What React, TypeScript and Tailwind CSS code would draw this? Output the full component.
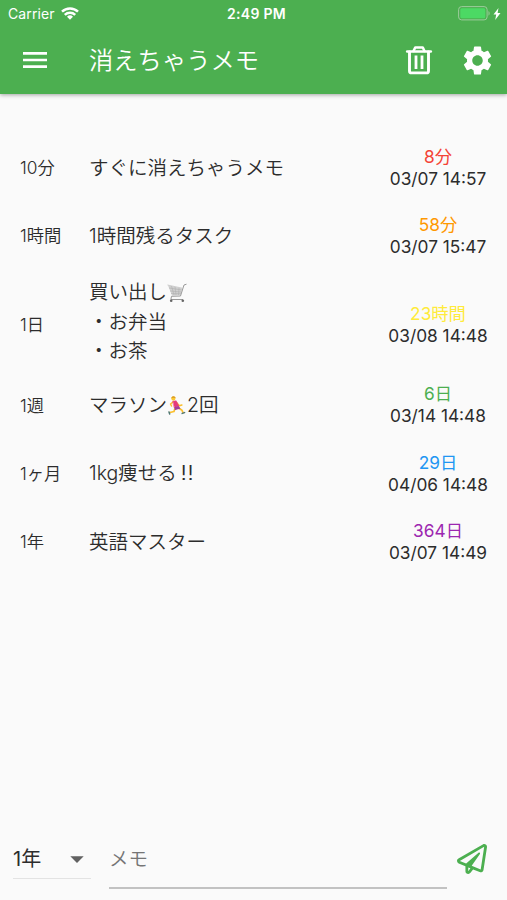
import { FaRegPaperPlane } from 'react-icons/fa';
import { MdArrowDropDown, MdMenu, MdSettings } from 'react-icons/md';
import { ReactNode } from 'react';

type Memo = {
  id: number;
  period: string;
  lines: ReactNode[];
  remaining: string;
  color: string;
  expires: string;
};

const CartIcon = () => (
  <svg viewBox="0 0 20 20" className="inline-block w-5 h-5 align-[-4px]" fill="none">
    <path d="M1 2.5 15 5.5 13.5 12 5 12.5Z" fill="#d0d0d0" />
    <path d="M.5 2 15.3 5.2M2 5l13 2M3 8l11.5 1M4 10.5l10 .2M4.5 3 7 12M8 4l1 8M12 5l-.5 7" stroke="#b0b0b0" strokeWidth=".6" />
    <path d="M19.5 1.2 17 2 13.5 13l-9 .3-.6 3.2H16" stroke="#9a9a9a" strokeWidth="1" />
    <circle cx="4.2" cy="17.7" r="1.3" fill="#666" />
    <circle cx="15.8" cy="17.7" r="1.3" fill="#666" />
  </svg>
);

const RunnerIcon = () => (
  <svg viewBox="0 0 20 20" className="inline-block w-5 h-5 align-[-4px]" fill="none" strokeLinecap="round" strokeLinejoin="round">
    <path d="M6 6 3.500 8 4.500 10M9.500 6.500l2.800 3.300 2.600-.8" stroke="#fbc02d" strokeWidth="1.500" />
    <path d="M8 12 7 15.500 2.800 16.500M11.500 12l3.500 2.300 1 2.200" stroke="#fbc02d" strokeWidth="1.700" />
    <path d="M6 5.200 9.200 4.800l2.600 5.200-4.300 1.500Z" fill="#e6397b" stroke="#e6397b" strokeWidth=".6" />
    <path d="M7.500 11 11.800 10l1.700 2.800-2.500.4-3.300 1Z" fill="#a03c9c" />
    <circle cx="6.400" cy="2.600" r="2.100" fill="#fbc834" />
    <path d="M4.300 2.200C4.600-.1 8-.3 8.600 1.900L6.200 1.700Z" fill="#d99a22" />
    <path d="m2 16 .7 2M15.200 17.400l2.400-.8" stroke="#4f7774" strokeWidth="1.500" />
  </svg>
);

const memos: Memo[] = [
  { id: 1, period: '10分', lines: ['すぐに消えちゃうメモ'], remaining: '8分', color: 'text-[#f44336]', expires: '03/07 14:57' },
  { id: 2, period: '1時間', lines: ['1時間残るタスク'], remaining: '58分', color: 'text-[#ff9800]', expires: '03/07 15:47' },
  { id: 3, period: '1日', lines: [<>買い出し<CartIcon /></>, '・お弁当', '・お茶'], remaining: '23時間', color: 'text-[#ffeb3b]', expires: '03/08 14:48' },
  { id: 4, period: '1週', lines: [<>マラソン<RunnerIcon />2回</>], remaining: '6日', color: 'text-[#4caf50]', expires: '03/14 14:48' },
  { id: 5, period: '1ヶ月', lines: [<>1kg痩せる<span className="inline-block w-5 text-center scale-x-125">‼</span></>], remaining: '29日', color: 'text-[#2196f3]', expires: '04/06 14:48' },
  { id: 6, period: '1年', lines: ['英語マスター'], remaining: '364日', color: 'text-[#9c27b0]', expires: '03/07 14:49' },
];

const TrashIcon = () => (
  <svg viewBox="0 0 28 30" className="w-7 h-[30px]" fill="none" stroke="currentColor" strokeLinejoin="round" strokeLinecap="round">
    <path d="M2.200 6.500h23.600" strokeWidth="2.600" />
    <path d="M8.500 6 10.300 2.400h7.400L19.500 6" strokeWidth="2.500" />
    <path d="M4.500 7v18.900q0 2 2 2h15q2 0 2-2V7" strokeWidth="2.900" />
    <path d="M11 10.500v13.500M17 10.500v13.500" strokeWidth="2.800" strokeLinecap="butt" />
  </svg>
);

const StatusBar = () => (
  <div className="grid grid-cols-3 items-center h-[27px] pl-2 pr-1.5">
    <div className="flex items-center gap-1.5">
      <span className="text-[14px] font-normal leading-none tracking-[0.1px]">Carrier</span>
      <svg viewBox="0 0 18 13" className="w-[18px] h-[13px]" fill="none" stroke="currentColor" strokeWidth="2.500">
        <path d="M1 4.700a11.500 11.500 0 0 1 16 0M3.800 7.900a7.500 7.500 0 0 1 10.400 0" />
        <path d="M9 12.800 6 9.800a4.300 4.300 0 0 1 6 0Z" fill="currentColor" stroke="none" />
      </svg>
    </div>
    <div className="pl-1 text-center text-[14px] font-semibold leading-none tracking-[0.3px]">2:49 PM</div>
    <div className="flex items-center justify-end gap-0.5">
      <svg viewBox="0 0 33 15" className="w-[33px] h-[15px]">
        <rect x=".6" y=".6" width="28.500" height="13.300" rx="3" fill="none" stroke="#9ccc9c" />
        <rect x="2.300" y="2.300" width="25" height="10" rx="1.500" fill="#4cd964" />
        <path d="M30.500 5c1.500.8 1.500 4 0 4.800Z" fill="#9ccc9c" />
      </svg>
      <svg viewBox="0 0 8 12" className="w-2 h-3" fill="currentColor">
        <path d="M5.500 0 .5 6.600h2.700L2.200 12l5.300-7H4.600Z" />
      </svg>
    </div>
  </div>
);

const MemoRow = ({ memo }: { memo: Memo }) => {
  const tall = memo.lines.length > 1;
  return (
    <li className={`flex items-center pl-5 pr-[18px] ${tall ? 'h-[101px]' : 'h-[68.2px]'}`}>
      <div className={`w-[69px] text-[17.300px] ${tall ? 'pt-2' : ''}`}>{memo.period}</div>
      <div className={`flex-1 text-[19.500px] leading-[29.500px] ${tall ? 'pt-[3px]' : 'pt-px'}`}>
        {memo.lines.map((line, i) => (
          <p key={i}>{line}</p>
        ))}
      </div>
      <div className={`text-center text-[17.300px] font-normal leading-[22px] w-[102px] whitespace-nowrap ${tall ? 'pt-2' : ''}`}>
        <p className={memo.color}>{memo.remaining}</p>
        <p>{memo.expires}</p>
      </div>
    </li>
  );
};

export default function App() {
  return (
    <div className="flex flex-col w-full h-[900px] bg-[#fafafa] text-[#2c2c2c] font-[350] font-['Inter','Noto_Sans_CJK_JP',sans-serif]">
      <header className="h-[94px] bg-[#4caf50] text-white shadow-[0_1px_4px_rgba(0,0,0,0.35)]">
        <StatusBar />
        <div className="flex items-center h-[66px] pl-[19px] pr-3">
          <MdMenu className="w-8 h-8" />
          <h1 className="flex-1 pl-[38px] text-[24.300px] font-[350] leading-none pt-px">消えちゃうメモ</h1>
          <TrashIcon />
          <MdSettings className="w-[35px] h-[35px] ml-[27px]" />
        </div>
      </header>

      <ul className="flex-1 pt-10">
        {memos.map((memo) => (
          <MemoRow key={memo.id} memo={memo} />
        ))}
      </ul>

      {/* Input bar */}
      <div className="flex items-start h-[70px] pl-[13px] pr-5">
        <button className="flex items-center justify-between w-[78px] h-[49px] pt-2.5 border-b border-[#e3e3e3]">
          <span className="text-[20px] font-normal">1年</span>
          <MdArrowDropDown className="w-8 h-8 -mr-0.5 text-[#616161]" />
        </button>
        <div className="flex-1 ml-[18px] h-[59px] pt-3.5 border-b-2 border-[#c2c2c2]">
          <span className="block text-[19.500px] leading-[30px] text-[#757575]">メモ</span>
        </div>
        <FaRegPaperPlane className="w-[30px] h-[30px] ml-2.5 mt-3.5 text-[#4caf50]" />
      </div>
    </div>
  );
}
